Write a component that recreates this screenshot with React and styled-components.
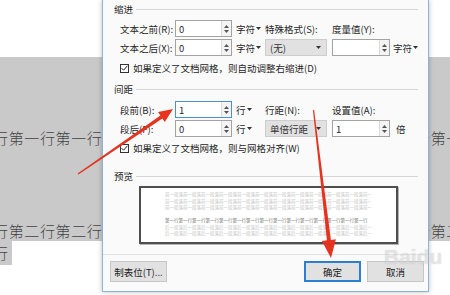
import React from 'react'
import styled, { createGlobalStyle } from 'styled-components'

const Global = createGlobalStyle`
  *, *::before, *::after { box-sizing: border-box; }
  html, body { margin: 0; padding: 0; }
  body {
    width: 450px;
    height: 295px;
    overflow: hidden;
    background: #fff;
    font-family: "Noto Sans CJK SC", "Noto Sans", sans-serif;
  }
`

const Stage = styled.div`
  position: relative;
  width: 450px;
  height: 295px;
  overflow: hidden;
  background: #fff;
`

/* ---------- document behind the dialog ---------- */

const Page = styled.div`
  display: flex;
  flex-direction: column;
  padding-top: 57px;
`

const Selection = styled.div`
  height: 184px;
  background: #c9c9c9;
  display: flex;
  flex-direction: column;
  overflow: hidden;
`

const DocLine = styled.div`
  font-family: "Noto Sans CJK SC", sans-serif;
  font-size: 15px;
  font-weight: 300;
  letter-spacing: 0.63px;
  line-height: 20px;
  color: #444;
  white-space: nowrap;
  margin-left: -7px;
  margin-top: ${p => p.$top}px;
`

const TailSelection = styled.div`
  width: 12px;
  height: 24px;
  background: #c9c9c9;
  overflow: hidden;
`

/* ---------- dialog ---------- */

const Dialog = styled.div`
  position: absolute;
  left: 102px;
  top: 0;
  width: 327px;
  height: 292px;
  background: #fafafa;
  border: 1px solid #8db3dc;
  border-top: none;
  box-shadow: 0 0 5px rgba(0, 0, 0, 0.25);
  padding: 3px 10px 0 11px;
  display: flex;
  flex-direction: column;
  color: #262626;
  font-size: 9.5px;
  line-height: 12px;
`

const GroupHeader = styled.div`
  display: flex;
  align-items: center;
  gap: 3px;
  height: 12px;
  margin-top: ${p => p.$top || 0}px;
  &::after {
    content: "";
    flex: 1;
    height: 1px;
    background: #d6d6d6;
  }
`

const FieldGrid = styled.div`
  display: grid;
  grid-template-columns: 55px 57px 33px 67px 58px auto;
  grid-auto-rows: 19px;
  align-items: center;
  padding-left: 6px;
  margin-top: ${p => p.$top}px;
`

const Label = styled.span`
  white-space: nowrap;
`

const Input = styled.div`
  height: 17px;
  width: ${p => p.$w || 57}px;
  border: 1px solid ${p => (p.$focus ? '#4a90d9' : '#a3a3a3')};
  background: #fff;
  display: flex;
  align-items: center;
  padding-left: 3px;
`

const Value = styled.span`
  flex: 1;
`

const Spin = styled.div`
  width: 10px;
  height: 100%;
  border-left: 1px solid #dcdcdc;
  background: #f4f4f4;
  display: flex;
  flex-direction: column;
  align-items: center;
  justify-content: center;
  gap: 2px;
`

const Unit = styled.span`
  padding-left: ${p => p.$pad ?? 4}px;
  white-space: nowrap;
  display: flex;
  align-items: center;
  gap: 1px;
`

const Select = styled.div`
  width: 62px;
  height: 17px;
  background: #e1e1e1;
  border: 1px solid #cdcdcd;
  display: flex;
  align-items: center;
  justify-content: space-between;
  padding: 0 5px 0 4px;
  color: #333;
`

const CheckRow = styled.div`
  display: flex;
  align-items: center;
  gap: 4px;
  height: 14px;
  padding-left: 6px;
  margin-top: ${p => p.$top}px;
  white-space: nowrap;
`

const Box = styled.span`
  width: 9px;
  height: 9px;
  border: 1px solid #333;
  background: #fff;
  display: flex;
  align-items: center;
  justify-content: center;
`

const Preview = styled.div`
  margin: 4px 0 0 25px;
  width: 259px;
  height: 58px;
  border: 2px solid #4e4e4e;
  box-shadow: 1px 1px 0 #b5b5b5;
  background: #fff;
  padding: 3px 0 0 24px;
  overflow: hidden;
`

const PreviewText = styled.div`
  width: 412px;
  transform: scale(0.5);
  transform-origin: top left;
`

const PreviewLine = styled.div`
  overflow: hidden;
  white-space: nowrap;
  font-size: 9px;
  line-height: 13px;
  height: 13px;
  color: ${p => (p.$current ? '#6c6c6c' : '#c2c2c2')};
`

const Divider = styled.div`
  height: 1px;
  background: #e2e2e2;
  margin: 10px -10px 0 -11px;
`

const ButtonRow = styled.div`
  display: flex;
  justify-content: space-between;
  margin: 6px -6px 0 -4px;
`

const RightButtons = styled.div`
  display: flex;
  gap: 6px;
`

const Button = styled.div`
  width: 57px;
  height: 21px;
  background: #e1e1e1;
  border: ${p => (p.$primary ? '2px solid #2b7fd0' : '1px solid #c6c6c6')};
  display: flex;
  align-items: center;
  justify-content: center;
  color: #222;
`

/* ---------- overlays ---------- */

const Overlay = styled.svg`
  position: absolute;
  left: 0;
  top: 0;
  pointer-events: none;
`

const Watermark = styled.div`
  position: absolute;
  left: 384px;
  top: 245px;
  font-family: "Liberation Sans", sans-serif;
  font-size: 21px;
  font-weight: bold;
  color: rgba(255, 255, 255, 0.5);
  text-shadow: 0 0 1px rgba(0, 0, 0, 0.22);
  pointer-events: none;
`

const Caret = () => (
  <svg width="5" height="3" viewBox="0 0 5 3">
    <path d="M0 0h5L2.5 3z" fill="#333" />
  </svg>
)

const Spinner = () => (
  <Spin>
    <svg width="5" height="3" viewBox="0 0 5 3"><path d="M0 3h5L2.5 0z" fill="#555" /></svg>
    <svg width="5" height="3" viewBox="0 0 5 3"><path d="M0 0h5L2.5 3z" fill="#555" /></svg>
  </Spin>
)

const Field = ({ value, focus, w }) => (
  <Input $focus={focus} $w={w}>
    <Value>{value}</Value>
    <Spinner />
  </Input>
)

const Check = ({ children, top }) => (
  <CheckRow $top={top}>
    <Box>
      <svg width="7" height="6" viewBox="0 0 7 6">
        <path d="M0.6 3.2 2.6 5.2 6.4 0.8" fill="none" stroke="#222" strokeWidth="1" />
      </svg>
    </Box>
    {children}
  </CheckRow>
)

const line1 = '行第一'.repeat(12)
const line2 = '行第二'.repeat(12)
const before = '前一段落前一段落前一段落前一段落前一段落前一段落前一段落前一段落前一段落前一段落前一段落前一段落'
const current = '第一行第一行第一行第一行第一行第一行第一行第一行第一行第一行第一行第一行第一行第一行第一行'
const after = '后一段落后一段落后一段落后一段落后一段落后一段落后一段落后一段落后一段落后一段落后一段落后一段落'

export default function App() {
  return (
    <Stage>
      <Global />
      <Page>
        <Selection>
          <DocLine $top={71}>{line1}</DocLine>
          <DocLine $top={73}>{line2}</DocLine>
        </Selection>
        <TailSelection>
          <DocLine $top={2}>行</DocLine>
        </TailSelection>
      </Page>

      <Dialog>
        <GroupHeader>缩进</GroupHeader>
        <FieldGrid $top={4}>
          <Label>文本之前(R):</Label>
          <Field value="0" />
          <Unit>字符<Caret /></Unit>
          <Label>特殊格式(S):</Label>
          <Label>度量值(Y):</Label>
          <span />
          <Label>文本之后(X):</Label>
          <Field value="0" />
          <Unit>字符<Caret /></Unit>
          <Select>(无)<Caret /></Select>
          <Field value="" w={58} />
          <Unit $pad={3}>字符<Caret /></Unit>
        </FieldGrid>
        <Check top={4}>如果定义了文档网格，则自动调整右缩进(D)</Check>

        <GroupHeader $top={8}>间距</GroupHeader>
        <FieldGrid $top={5}>
          <Label>段前(B):</Label>
          <Field value="1" focus />
          <Unit>行<Caret /></Unit>
          <Label>行距(N):</Label>
          <Label>设置值(A):</Label>
          <span />
          <Label>段后(F):</Label>
          <Field value="0" />
          <Unit>行<Caret /></Unit>
          <Select>单倍行距<Caret /></Select>
          <Field value="1" w={58} />
          <Unit $pad={6}>倍</Unit>
        </FieldGrid>
        <Check top={3}>如果定义了文档网格，则与网格对齐(W)</Check>

        <GroupHeader $top={15}>预览</GroupHeader>
        <Preview>
          <PreviewText>
            <PreviewLine>{before}</PreviewLine>
            <PreviewLine>{before}</PreviewLine>
            <PreviewLine>{before}</PreviewLine>
            <PreviewLine />
            <PreviewLine $current>{current}</PreviewLine>
            <PreviewLine>{after}</PreviewLine>
            <PreviewLine>{after}</PreviewLine>
          </PreviewText>
        </Preview>

        <Divider />
        <ButtonRow>
          <Button>制表位(T)...</Button>
          <RightButtons>
            <Button $primary>确定</Button>
            <Button>取消</Button>
          </RightButtons>
        </ButtonRow>
      </Dialog>

      <Watermark>Baidu</Watermark>

      <Overlay width="450" height="295" viewBox="0 0 450 295">
        <polygon
          points="77.6,173.4 160.4,115.4 158,111.9 173,109 164.8,121.9 162.4,118.4 78.4,174.6"
          fill="#e5331f"
        />
        <polygon
          points="312.9,110.1 326.9,240.3 321.9,240.9 331,258 335.9,239.3 330.9,239.9 314.1,109.9"
          fill="#e5331f"
        />
      </Overlay>
    </Stage>
  )
}
